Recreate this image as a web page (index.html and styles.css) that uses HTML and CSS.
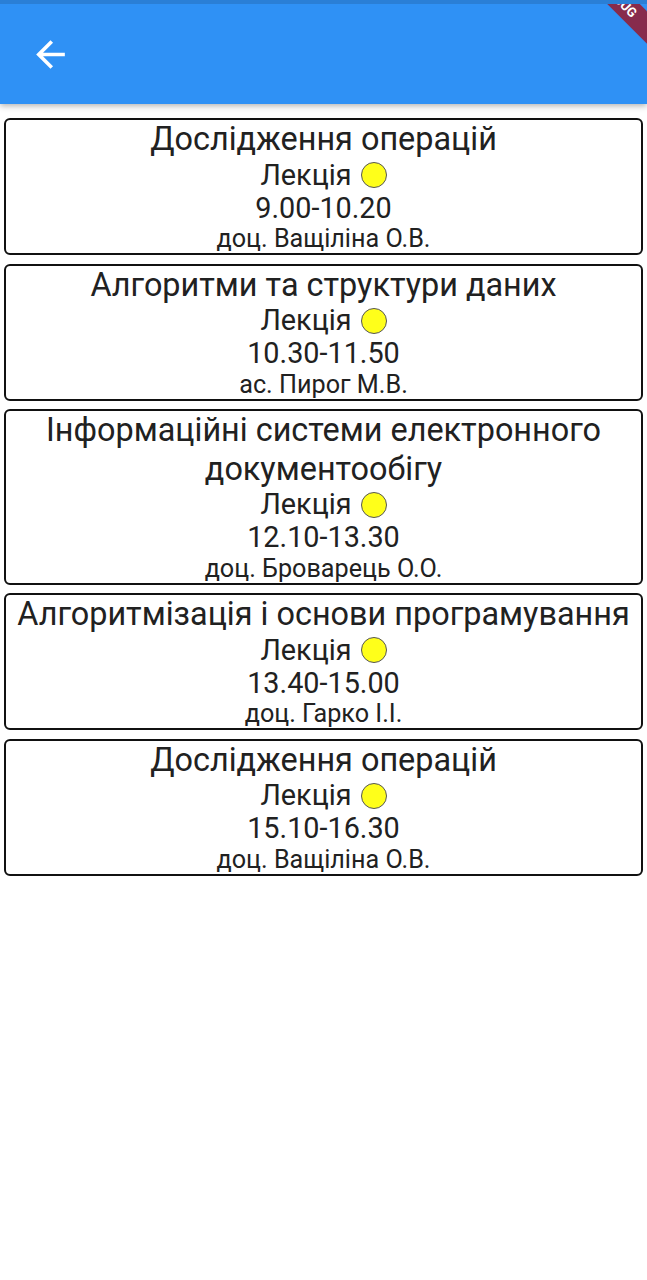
FILE: index.html
```html
<!DOCTYPE html>
<html lang="uk">
<head>
<meta charset="utf-8">
<title>Розклад</title>
<link rel="stylesheet" href="styles.css">
</head>
<body>
<header class="appbar">
  <button class="back" aria-label="Назад">
    <svg viewBox="0 0 24 24" width="43" height="43"><path fill="#fff" d="M20 11H7.83l5.59-5.59L12 4l-8 8 8 8 1.41-1.41L7.83 13H20v-2z"/></svg>
  </button>
  <div class="debug"><span>DEBUG</span></div>
</header>
<main class="list">
  <section class="card">
    <div class="title">Дослідження операцій</div>
    <div class="kind">Лекція <span class="dot"></span></div>
    <div class="time">9.00-10.20</div>
    <div class="teacher">доц. Ващіліна О.В.</div>
  </section>
  <section class="card">
    <div class="title">Алгоритми та структури даних</div>
    <div class="kind">Лекція <span class="dot"></span></div>
    <div class="time">10.30-11.50</div>
    <div class="teacher">ас. Пирог М.В.</div>
  </section>
  <section class="card">
    <div class="title">Інформаційні системи електронного документообігу</div>
    <div class="kind">Лекція <span class="dot"></span></div>
    <div class="time">12.10-13.30</div>
    <div class="teacher">доц. Броварець О.О.</div>
  </section>
  <section class="card">
    <div class="title">Алгоритмізація і основи програмування</div>
    <div class="kind">Лекція <span class="dot"></span></div>
    <div class="time">13.40-15.00</div>
    <div class="teacher">доц. Гарко І.І.</div>
  </section>
  <section class="card">
    <div class="title">Дослідження операцій</div>
    <div class="kind">Лекція <span class="dot"></span></div>
    <div class="time">15.10-16.30</div>
    <div class="teacher">доц. Ващіліна О.В.</div>
  </section>
</main>
</body>
</html>
```
FILE: styles.css
```css
* { box-sizing: border-box; }
html, body { margin: 0; padding: 0; background: #fff; }
body {
  font-family: Roboto, "Noto Sans", "Liberation Sans", sans-serif;
  color: #212121;
  width: 647px;
  overflow: hidden;
}
.appbar {
  position: relative;
  height: 104px;
  background: #2f91f5;
  border-top: 4px solid #2a7fd6;
  display: flex;
  align-items: center;
  box-shadow: 0 2px 6px rgba(0,0,0,0.3);
  overflow: hidden;
}
.back {
  width: 100px;
  height: 100px;
  border: 0;
  background: transparent;
  padding: 0;
  display: flex;
  align-items: center;
  justify-content: center;
}
.back svg { display: block; }
.debug {
  position: absolute;
  top: -4px;
  right: 0;
  width: 120px;
  height: 100px;
  overflow: hidden;
}
.debug span {
  position: absolute;
  top: -11.5px;
  right: -123px;
  width: 300px;
  height: 23px;
  background: rgba(140, 38, 66, 0.95);
  color: #fff;
  font-size: 13px;
  font-weight: bold;
  text-align: center;
  line-height: 23px;
  transform: rotate(45deg);
  transform-origin: center;
}
.list {
  display: flex;
  flex-direction: column;
  gap: 8.5px;
  padding: 14px 4px 0;
}
.card {
  border: 2px solid #111;
  border-radius: 6px;
  text-align: center;
  display: flex;
  flex-direction: column;
  align-items: center;
}
.title {
  font-size: 32.4px;
  line-height: 38.5px;
  padding: 0 4px;
}
.kind {
  font-size: 28.8px;
  line-height: 33px;
  display: flex;
  align-items: center;
  gap: 9px;
}
.dot {
  display: inline-block;
  width: 26px;
  height: 26px;
  border-radius: 50%;
  background: #ffff1a;
  border: 1px solid #555;
}
.time {
  font-size: 28.8px;
  line-height: 33.5px;
}
.teacher {
  font-size: 25.2px;
  line-height: 28px;
}
```
